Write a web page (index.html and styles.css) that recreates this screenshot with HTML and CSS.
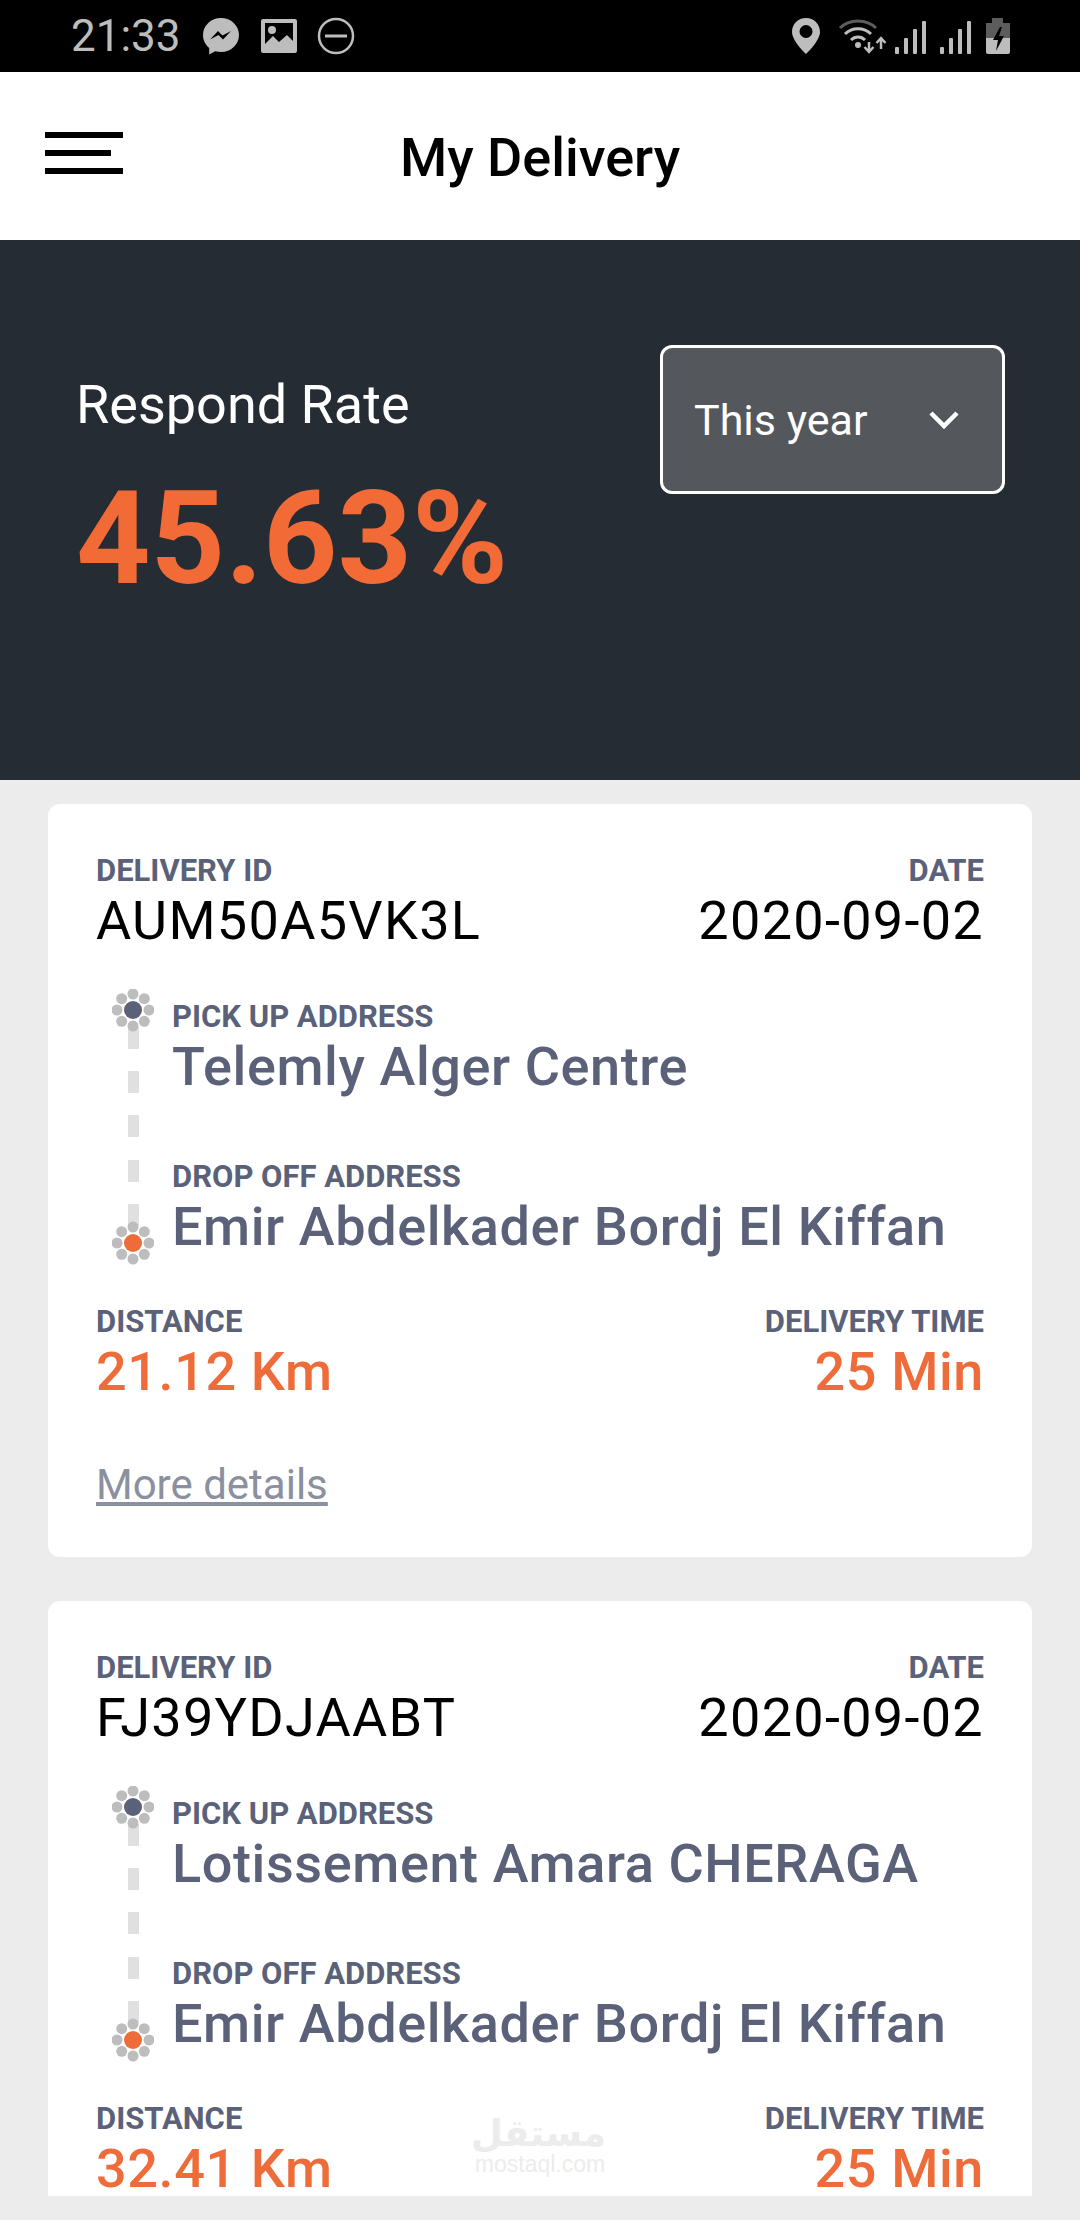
FILE: index.html
```html
<!DOCTYPE html>
<html lang="en">

<head>
    <meta charset="UTF-8">
    <meta name="viewport" content="width=device-width, initial-scale=1.0">
    <title>My Delivery</title>
    <link rel="stylesheet" href="styles.css">
</head>

<body>
    <svg class="defs" width="0" height="0">
        <defs>
            <g id="petals" fill="#bdbdbd">
                <circle cx="21" cy="5" r="5.500" />
                <circle cx="32.300" cy="9.700" r="5.500" />
                <circle cx="37" cy="21" r="5.500" />
                <circle cx="32.300" cy="32.300" r="5.500" />
                <circle cx="21" cy="37" r="5.500" />
                <circle cx="9.700" cy="32.300" r="5.500" />
                <circle cx="5" cy="21" r="5.500" />
                <circle cx="9.700" cy="9.700" r="5.500" />
            </g>
            <g id="route">
                <g fill="#e0e0e0">
                    <rect x="16" y="38" width="11" height="22" />
                    <rect x="16" y="82" width="11" height="22" />
                    <rect x="16" y="126" width="11" height="22" />
                    <rect x="16" y="171" width="11" height="22" />
                    <rect x="16" y="215" width="11" height="22" />
                </g>
                <use href="#petals" />
                <circle cx="21" cy="21" r="9" fill="#5a6178" />
                <use href="#petals" y="233" />
                <circle cx="21" cy="254" r="9" fill="#ee6c3a" />
            </g>
        </defs>
    </svg>

    <div class="status-bar">
        <div class="status-left">
            <span class="clock">21:33</span>
            <svg class="icon-messenger" width="36" height="38" viewBox="0 0 36 38">
                <path d="M18 1C8 1 0 8.500 0 18c0 5.200 2.300 9.800 6.200 13v6.500l6-3.300c1.800.5 3.800.8 5.800.8 10 0 18-7.500 18-17S28 1 18 1z" fill="#bdbdbd" />
                <path d="M7 22.500l8-8.500 4.500 4.500 8.500-4.500-8 8.500-4.500-4.500z" fill="#000" />
            </svg>
            <svg class="icon-image" width="36" height="34" viewBox="0 0 36 34">
                <path d="M2 0h32a2 2 0 0 1 2 2v30a2 2 0 0 1-2 2H2a2 2 0 0 1-2-2V2a2 2 0 0 1 2-2zm2 4v21l8-8 6 6 8-7 6 6V4z" fill="#bdbdbd" fill-rule="evenodd" />
                <circle cx="11" cy="11" r="4" fill="#bdbdbd" />
            </svg>
            <svg class="icon-dnd" width="38" height="38" viewBox="0 0 38 38">
                <circle cx="19" cy="19" r="17" fill="none" stroke="#bdbdbd" stroke-width="2.500" />
                <rect x="8" y="17.500" width="22" height="3" fill="#bdbdbd" />
            </svg>
        </div>
        <div class="status-right">
            <svg class="icon-pin" width="28" height="36" viewBox="0 0 28 36">
                <path d="M14 0C6 0 0 6 0 14c0 9 14 22 14 22s14-13 14-22C28 6 22 0 14 0zm0 20a6.500 6.500 0 1 1 0-13 6.500 6.500 0 0 1 0 13z" fill="#bdbdbd" fill-rule="evenodd" />
            </svg>
            <svg class="icon-wifi" width="50" height="36" viewBox="0 0 50 36" fill="none">
                <path d="M2 10C11 .5 29 .5 38 10" stroke="#5c5c5c" stroke-width="3" />
                <path d="M7 16c7-7 19-7 26 0" stroke="#bdbdbd" stroke-width="3" />
                <path d="M13 22c4-4 10-4 14 0" stroke="#bdbdbd" stroke-width="3" />
                <circle cx="20" cy="27" r="3" fill="#bdbdbd" />
                <path d="M31 24v10M26.500 29l4.500 5 4.500-5" stroke="#bdbdbd" stroke-width="2.500" />
                <path d="M43 31V20M38.500 25l4.500-5 4.500 5" stroke="#bdbdbd" stroke-width="2.500" />
            </svg>
            <div class="signal"><i class="bar-1"></i><i class="bar-2"></i><i class="bar-3"></i><i class="bar-4"></i></div>
            <div class="signal"><i class="bar-1"></i><i class="bar-2"></i><i class="bar-3"></i><i class="bar-4"></i></div>
            <svg class="icon-battery" width="24" height="36" viewBox="0 0 24 36">
                <path d="M6 0h11v5h7v15H0V5h6z" fill="#5c5c5c" />
                <path d="M0 20h24v14a2 2 0 0 1-2 2H2a2 2 0 0 1-2-2z" fill="#bdbdbd" />
                <path d="M14 9l-7 13h5l-2 11 8-15h-5l3-9z" fill="#000" />
            </svg>
        </div>
    </div>

    <header class="app-header">
        <div class="hamburger"><span></span><span class="short"></span><span></span></div>
        <h1>My Delivery</h1>
    </header>

    <section class="summary">
        <div class="rate">
            <div class="rate-label">Respond Rate</div>
            <div class="rate-value">45.63%</div>
        </div>
        <div class="period-select">
            <span>This year</span>
            <svg width="32" height="22" viewBox="0 0 32 22">
                <path d="M3 4l13 13L29 4" fill="none" stroke="#fff" stroke-width="4.500" />
            </svg>
        </div>
    </section>

    <main class="list">
        <article class="card">
            <div class="row">
                <div>
                    <div class="label">DELIVERY ID</div>
                    <div class="code">AUM50A5VK3L</div>
                </div>
                <div class="right">
                    <div class="label">DATE</div>
                    <div class="code">2020-09-02</div>
                </div>
            </div>
            <div class="route">
                <svg class="route-line" width="42" height="276" viewBox="0 0 42 276"><use href="#route" /></svg>
                <div class="stops">
                    <div class="label">PICK UP ADDRESS</div>
                    <div class="address">Telemly Alger Centre</div>
                    <div class="label drop">DROP OFF ADDRESS</div>
                    <div class="address">Emir Abdelkader Bordj El Kiffan</div>
                </div>
            </div>
            <div class="row metrics">
                <div>
                    <div class="label">DISTANCE</div>
                    <div class="metric">21.12 Km</div>
                </div>
                <div class="right">
                    <div class="label">DELIVERY TIME</div>
                    <div class="metric">25 Min</div>
                </div>
            </div>
            <a class="more" href="#">More details</a>
        </article>

        <article class="card">
            <div class="row">
                <div>
                    <div class="label">DELIVERY ID</div>
                    <div class="code">FJ39YDJAABT</div>
                </div>
                <div class="right">
                    <div class="label">DATE</div>
                    <div class="code">2020-09-02</div>
                </div>
            </div>
            <div class="route">
                <svg class="route-line" width="42" height="276" viewBox="0 0 42 276"><use href="#route" /></svg>
                <div class="stops">
                    <div class="label">PICK UP ADDRESS</div>
                    <div class="address">Lotissement Amara CHERAGA</div>
                    <div class="label drop">DROP OFF ADDRESS</div>
                    <div class="address">Emir Abdelkader Bordj El Kiffan</div>
                </div>
            </div>
            <div class="row metrics">
                <div>
                    <div class="label">DISTANCE</div>
                    <div class="metric">32.41 Km</div>
                </div>
                <div class="right">
                    <div class="label">DELIVERY TIME</div>
                    <div class="metric">25 Min</div>
                </div>
            </div>
        </article>
    </main>

    <div class="watermark">
        <div class="watermark-ar" lang="ar" dir="rtl">مستقل</div>
        <div class="watermark-en">mostaql.com</div>
    </div>
</body>

</html>
```

FILE: styles.css
```css
* {
    box-sizing: border-box;
}

body {
    font-family: 'Roboto', sans-serif;
    margin: 0;
    padding: 0;
    width: 1080px;
    height: 2220px;
    overflow: hidden;
    position: relative;
    background-color: #ececec;
    display: flex;
    flex-direction: column;
}

.defs {
    position: absolute;
}

.status-bar {
    height: 72px;
    flex-shrink: 0;
    background-color: #000;
    color: #bdbdbd;
    display: flex;
    justify-content: space-between;
    align-items: center;
    padding: 0 70px 0 71px;
}

.status-left,
.status-right {
    display: flex;
    align-items: center;
}

.clock {
    font-size: 44px;
    line-height: 72px;
    margin-right: 22px;
}

.icon-image {
    margin-left: 22px;
}

.icon-dnd {
    margin-left: 20px;
}

.icon-wifi {
    margin-left: 18px;
    margin-right: -6px;
}

.signal {
    display: flex;
    align-items: flex-end;
    gap: 5px;
    height: 36px;
    width: 32px;
    margin-left: 13px;
}

.signal i {
    display: block;
    width: 4px;
    background-color: #bdbdbd;
    border-radius: 1px;
}

.bar-1 { height: 7px; }
.bar-2 { height: 16px; }
.bar-3 { height: 25px; }
.bar-4 { height: 33px; }

.icon-battery {
    margin-left: 14px;
}

.app-header {
    height: 168px;
    flex-shrink: 0;
    background-color: #fff;
    display: grid;
    grid-template-columns: 1fr auto 1fr;
    align-items: center;
    padding: 0 45px;
}

.hamburger {
    display: flex;
    flex-direction: column;
    gap: 12px;
    margin-top: -6px;
}

.hamburger span {
    display: block;
    width: 78px;
    height: 6px;
    background-color: #000;
}

.hamburger .short {
    width: 66px;
}

h1 {
    margin: 2px 0 0;
    font-size: 54px;
    font-weight: 500;
    color: #000;
}

.summary {
    height: 540px;
    flex-shrink: 0;
    background-color: #262c33;
    display: flex;
    justify-content: space-between;
    align-items: flex-start;
    padding: 105px 75px 0 76px;
}

.rate-label {
    font-size: 54px;
    line-height: 60px;
    color: #fff;
    margin-top: 30px;
}

.rate-value {
    font-size: 130px;
    line-height: 150px;
    font-weight: 700;
    color: #f26a36;
    margin-top: 29px;
}

.period-select {
    width: 345px;
    height: 149px;
    background-color: #54585c;
    border: 3px solid #fff;
    border-radius: 12px;
    display: flex;
    justify-content: space-between;
    align-items: center;
    padding: 0 42px 0 31px;
    font-size: 43px;
    color: #fff;
}

.list {
    flex: 1;
    min-height: 0;
    overflow: hidden;
    margin-bottom: 24px;
    padding: 24px 48px 0;
    display: flex;
    flex-direction: column;
    gap: 44px;
}

.card {
    flex-shrink: 0;
    background-color: #fff;
    border-radius: 12px;
    padding: 48px 48px 47px;
}

.row {
    display: flex;
    justify-content: space-between;
}

.right {
    text-align: right;
}

.label {
    font-size: 31px;
    line-height: 36px;
    font-weight: 700;
    color: #5a6178;
    margin-bottom: 4px;
    padding-top: 1px;
}

.code {
    font-size: 54px;
    line-height: 55px;
    letter-spacing: 1.300px;
    color: #000;
}

.route {
    display: flex;
    margin-top: 44px;
    margin-left: 16px;
    gap: 18px;
}

.route-line {
    flex-shrink: 0;
    margin: -3px 0 -5px;
}

.stops {
    padding-top: 6px;
}

.address {
    font-size: 54px;
    line-height: 55px;
    letter-spacing: 0.600px;
    font-weight: 500;
    color: #5a6178;
}

.drop {
    margin-top: 64px;
}

.metrics {
    margin-top: 43px;
}

.metric {
    font-size: 54px;
    line-height: 55px;
    letter-spacing: 0.600px;
    font-weight: 500;
    color: #ee6c3a;
}

.more {
    display: block;
    margin-top: 61px;
    font-size: 42px;
    line-height: 50px;
    color: #8b90a0;
}

.watermark {
    position: absolute;
    left: 474px;
    top: 2116px;
    width: 132px;
    text-align: center;
    color: #ececec;
}

.watermark-ar {
    font-family: 'DejaVu Sans', sans-serif;
    font-size: 37px;
    line-height: 36px;
    font-weight: 700;
}

.watermark-en {
    font-family: 'Liberation Sans', sans-serif;
    font-size: 23px;
    line-height: 24px;
}
```
